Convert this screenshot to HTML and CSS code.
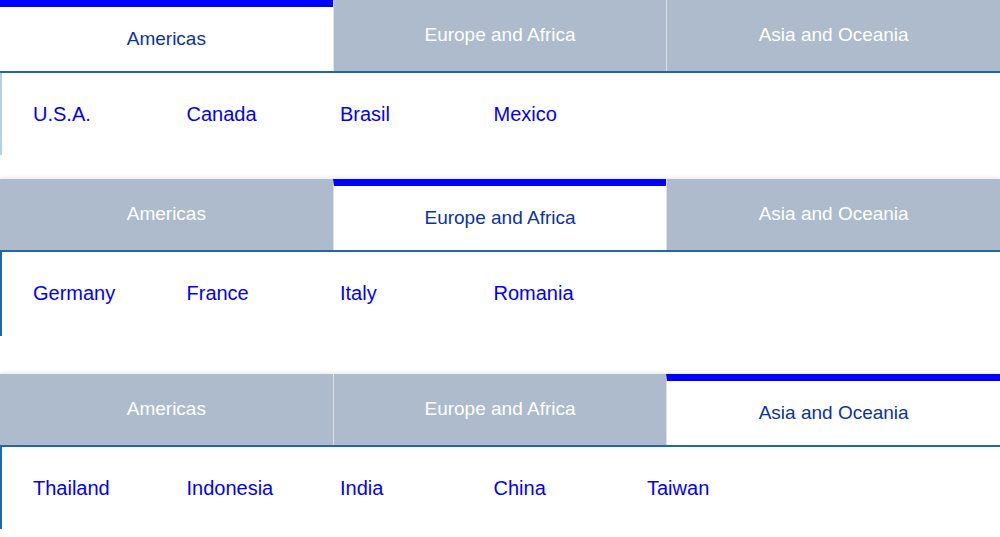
FILE: index.html
```html
<!DOCTYPE html>
<html>
<head>
	<meta charset="utf-8">
	<title>Regions</title>
	<link rel="stylesheet" href="styles.css">
</head>
<body>
<main>
	<section class="region region-first">
		<nav class="tabs">
			<a class="tab active">Americas</a>
			<a class="tab">Europe and Africa</a>
			<a class="tab">Asia and Oceania</a>
		</nav>
		<ul class="panel panel-fade">
			<li><a>U.S.A.</a></li>
			<li><a>Canada</a></li>
			<li><a>Brasil</a></li>
			<li><a>Mexico</a></li>
		</ul>
	</section>

	<section class="region region-second">
		<nav class="tabs">
			<a class="tab">Americas</a>
			<a class="tab active">Europe and Africa</a>
			<a class="tab">Asia and Oceania</a>
		</nav>
		<ul class="panel panel-tall">
			<li><a>Germany</a></li>
			<li><a>France</a></li>
			<li><a>Italy</a></li>
			<li><a>Romania</a></li>
		</ul>
	</section>

	<section class="region">
		<nav class="tabs">
			<a class="tab">Americas</a>
			<a class="tab">Europe and Africa</a>
			<a class="tab active">Asia and Oceania</a>
		</nav>
		<ul class="panel">
			<li><a>Thailand</a></li>
			<li><a>Indonesia</a></li>
			<li><a>India</a></li>
			<li><a>China</a></li>
			<li><a>Taiwan</a></li>
		</ul>
	</section>
</main>
</body>
</html>
```

FILE: styles.css
```css
body { margin: 0; background: #fff; font-family: "Liberation Sans", Arial, sans-serif; }
main { display: flex; flex-direction: column; }

.region { display: flex; flex-direction: column; }
.region-first { margin-bottom: 24px; }
.region-second { margin-bottom: 38px; }

.tabs { display: flex; height: 71px; border-bottom: 2px solid #2366a6; box-shadow: 0 -2px 3px rgba(0,0,0,0.07); }
.tab { flex: 1; display: flex; align-items: center; justify-content: center; padding-bottom: 1px; background: #adbbcc; color: #fff; font-size: 19px; cursor: pointer; }
.tab + .tab { border-left: 1px solid #dde1e6; }
.tab.active { background: #fff; color: #0a33a3; border-top: 7px solid #0000ff; padding-bottom: 0; }

.panel { display: flex; margin: 0; padding: 30px 0 0 31px; height: 52px; list-style: none; border-left: 2px solid #2366a6; }
.panel-fade { border-left-color: #b6cfe6; }
.panel-tall { height: 54px; }
.panel li { width: 153.5px; }
.panel a { color: #0000ff; font-size: 20px; cursor: pointer; }
```
